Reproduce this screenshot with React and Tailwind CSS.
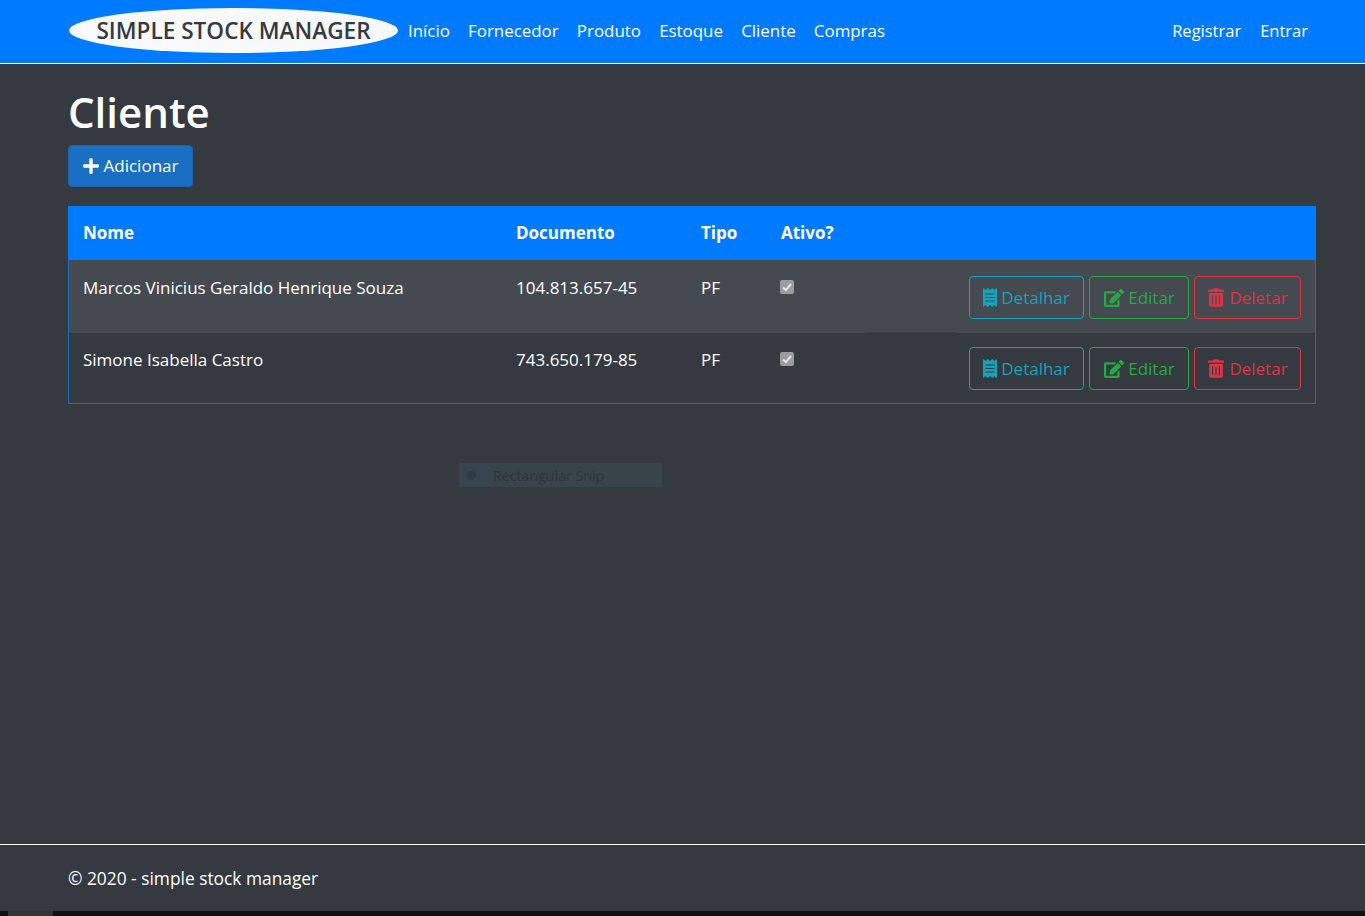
import React from 'react';
import { FaPlus, FaReceipt, FaEdit, FaTrashAlt } from 'react-icons/fa';

const links = ['Início', 'Fornecedor', 'Produto', 'Estoque', 'Cliente', 'Compras'];

const clientes = [
    { nome: 'Marcos Vinicius Geraldo Henrique Souza', documento: '104.813.657-45', tipo: 'PF', rowClass: 'bg-[#454950] h-[73px]', pad: 'pt-[15px]', btnPad: 'pt-[16px]' },
    { nome: 'Simone Isabella Castro', documento: '743.650.179-85', tipo: 'PF', rowClass: 'h-[71px] [&>td]:border-b', pad: 'pt-[14px]', btnPad: 'pt-[14px]' },
];

const ActionButtons = () => (
    <div className="flex justify-end gap-[5px]">
        <button className="w-[115px] h-[43px] flex items-center justify-center gap-[4px] rounded-[4px] border border-[#17a2b8] text-[#17a2b8] text-[17px]">
            <FaReceipt className="w-[14px] h-[19px]" /> Detalhar
        </button>
        <button className="w-[100px] h-[43px] flex items-center justify-center gap-[4px] pl-[1px] rounded-[4px] border border-[#28a745] text-[#28a745] text-[17px]">
            <FaEdit className="w-[20px] h-[18px]" /> Editar
        </button>
        <button className="w-[107px] h-[43px] flex items-center justify-center gap-[5px] pl-[1px] rounded-[4px] border border-[#dc3545] text-[#dc3545] text-[17px]">
            <FaTrashAlt className="w-[16px] h-[19px]" /> Deletar
        </button>
    </div>
);

const App = () => {
    return (
        <div className="relative min-h-[916px] flex flex-col bg-[#343a40] text-white text-[17px] font-['Open_Sans',sans-serif] overflow-hidden">
            {/* Navbar */}
            <nav className="h-[64px] bg-[#007bff] border-b border-white flex items-center pl-[69px] pr-[57px] pb-[2px] shrink-0">
                <a className="w-[329px] h-[45px] mr-[10px] rounded-[50%] bg-[#f8f9fa] text-[#343a40] text-[22.6px] font-semibold flex items-center justify-center">
                    SIMPLE STOCK MANAGER
                </a>
                <div className="flex gap-[18.2px] text-[16.9px]">
                    {links.map(l => <a key={l}>{l}</a>)}
                </div>
                <div className="ml-auto flex gap-[19px] text-[16.5px] pt-[1px]">
                    <a>Registrar</a>
                    <a>Entrar</a>
                </div>
            </nav>

            <main className="flex-1 pl-[68px] pr-[49px]">
                <h1 className="text-[42px] leading-[48px] font-semibold mt-[24px] mb-[9px]">Cliente</h1>
                <button className="w-[125px] h-[42px] flex items-center justify-center gap-[5px] rounded-[4px] bg-[#1a6fc4] border border-[#1b64ad] text-white">
                    <FaPlus className="w-[16px] h-[18px]" /> Adicionar
                </button>

                {/* Tabela */}
                <table className="w-[1248px] mt-[19px] table-fixed border-separate border-spacing-0">
                    <thead>
                        <tr className="bg-[#007bff] h-[54px] text-left font-bold">
                            <th className="w-[433px] pl-[15px]">Nome</th>
                            <th className="w-[185px] pl-[15px]">Documento</th>
                            <th className="w-[80px] pl-[15px]">Tipo</th>
                            <th className="w-[100px] pl-[15px]">Ativo?</th>
                            <th></th>
                        </tr>
                    </thead>
                    <tbody>
                        {clientes.map(c => (
                            <tr key={c.documento} className={`${c.rowClass} [&>td]:border-[#1a6fc4]`}>
                                <td className={`border-l pl-[14px] align-top ${c.pad}`}>{c.nome}</td>
                                <td className={`pl-[15px] align-top ${c.pad}`}>{c.documento}</td>
                                <td className={`pl-[15px] align-top ${c.pad}`}>{c.tipo}</td>
                                <td className={`pl-[14px] align-top ${c.pad}`}>
                                    <span className="mt-[5px] w-[14px] h-[14px] rounded-[2px] bg-[#9a9c9f] flex items-center justify-center">
                                        <svg viewBox="0 0 14 14" className="w-[14px] h-[14px]" fill="none" stroke="#e6e6e6" strokeWidth="2">
                                            <path d="M3 7.5l2.8 2.6L11 4" />
                                        </svg>
                                    </span>
                                </td>
                                <td className={`border-r pr-[14px] align-top ${c.btnPad}`}><ActionButtons /></td>
                            </tr>
                        ))}
                    </tbody>
                </table>
            </main>

            {/* sobra de captura na linha da tabela */}
            <div className="absolute left-[866px] top-[332px] w-[90px] h-[1px] bg-[#393d44]"></div>

            {/* Rectangular Snip */}
            <div className="absolute left-[459px] top-[463px] w-[203px] h-[24px] bg-[#39434a] flex items-center text-[#2f353c] text-[14.2px]">
                <span className="w-[28px] h-[24px] bg-[#37454e] flex items-center justify-center pr-[4px]">
                    <span className="w-[9px] h-[9px] rounded-full bg-[#2f3a44]"></span>
                </span>
                <span className="ml-[6px] pt-[1px]">Rectangular Snip</span>
            </div>

            {/* Footer */}
            <footer className="h-[67px] border-t border-white pl-[68px] flex items-center text-[17.35px] shrink-0">
                © 2020 - simple stock manager
            </footer>
            <div className="h-[5px] bg-[#0f1011] shrink-0 pl-[8px]">
                <div className="w-[45px] h-[5px] bg-[#333333]"></div>
            </div>
        </div>
    );
};

export default App;
